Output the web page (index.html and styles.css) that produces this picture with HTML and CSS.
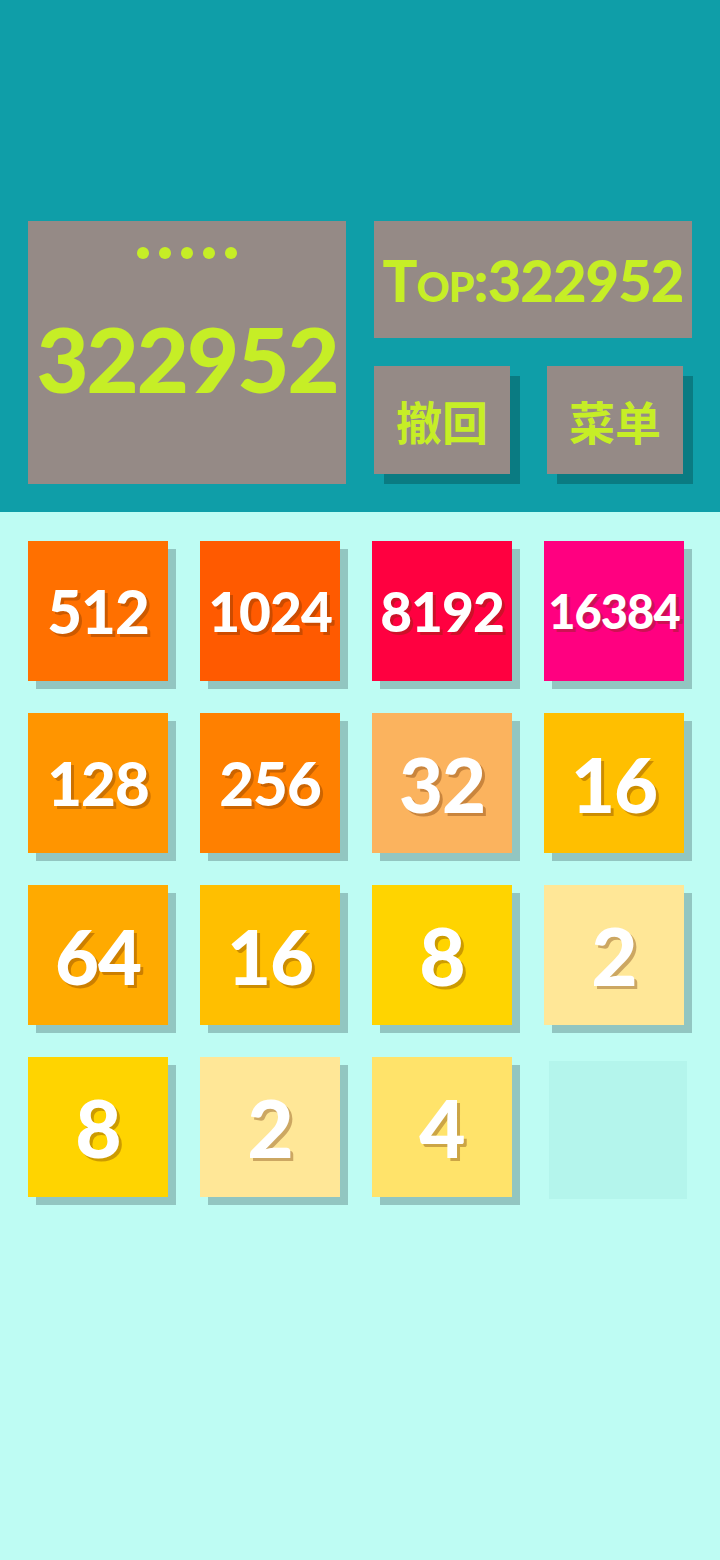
FILE: index.html
```html
<!DOCTYPE html>
<html lang="zh">
<head>
<meta charset="utf-8">
<title>2048</title>
<link rel="stylesheet" href="styles.css">
</head>
<body>
<header class="top">
  <div class="score-box">
    <div class="dots"><span></span><span></span><span></span><span></span><span></span></div>
    <div class="score">322952</div>
  </div>
  <div class="side">
    <div class="best">Top:322952</div>
    <div class="btns">
      <div class="btn">撤回</div>
      <div class="btn">菜单</div>
    </div>
  </div>
</header>
<main class="board">
  <div class="tile t512">512</div>
  <div class="tile t1024 n4">1024</div>
  <div class="tile t8192 n4">8192</div>
  <div class="tile t16384 n5">16384</div>
  <div class="tile t128">128</div>
  <div class="tile t256">256</div>
  <div class="tile t32 n2">32</div>
  <div class="tile t16 n2">16</div>
  <div class="tile t64 n2">64</div>
  <div class="tile t16 n2">16</div>
  <div class="tile t8 n1">8</div>
  <div class="tile t2 n1">2</div>
  <div class="tile t8 n1">8</div>
  <div class="tile t2 n1">2</div>
  <div class="tile t4 n1">4</div>
  <div class="empty"></div>
</main>
</body>
</html>
```
FILE: styles.css
```css
* { box-sizing: border-box; }
html, body { margin: 0; padding: 0; }
body {
  width: 720px;
  min-height: 1560px;
  background: #befcf3;
  font-family: "Lato", "Noto Sans", "Noto Sans CJK SC", sans-serif;
}
.top {
  height: 512px;
  background: #0f9ea8;
  padding: 221px 28px 0 28px;
  display: flex;
  gap: 28px;
}
.score-box {
  width: 318px;
  height: 263px;
  background: #958a86;
  display: flex;
  flex-direction: column;
  align-items: center;
  padding-top: 26px;
}
.dots { display: flex; gap: 10px; height: 12px; }
.dots span {
  width: 12px; height: 12px; border-radius: 50%;
  background: #c6ee26;
}
.score {
  margin-top: 44px;
  font-size: 90px;
  font-weight: 900;
  line-height: 110px;
  color: #c6ee26;
  letter-spacing: -2px;
}
.side { width: 318px; display: flex; flex-direction: column; gap: 28px; }
.best {
  height: 117px;
  background: #958a86;
  color: #c6ee26;
  font-size: 58px;
  font-weight: 900;
  font-variant: small-caps;
  display: flex;
  align-items: center;
  justify-content: center;
  letter-spacing: -1px;
  white-space: nowrap;
}
.btns { display: flex; justify-content: space-between; padding-right: 9px; }
.btn {
  width: 136px;
  height: 108px;
  background: #958a86;
  box-shadow: 10px 10px 0 #0a7b82;
  color: #c6ee26;
  font-family: "Noto Sans CJK SC", sans-serif;
  font-weight: 700;
  font-size: 46px;
  display: flex;
  align-items: center;
  justify-content: center;
}
.board {
  padding: 29px 28px 0 28px;
  display: grid;
  grid-template-columns: repeat(4, 140px);
  grid-auto-rows: 140px;
  gap: 32px;
}
.tile {
  box-shadow: 8px 8px 0 #92c6c1;
  color: #fff;
  font-weight: 900;
  font-size: 60px;
  display: flex;
  align-items: center;
  justify-content: center;
  text-shadow: 3px 3px 0 rgba(110, 50, 0, 0.35);
  letter-spacing: -1px;
}
.tile.n1 { font-size: 80px; }
.tile.n2 { font-size: 76px; }
.tile.n4 { font-size: 55px; }
.tile.n5 { font-size: 47px; }
.empty {
  width: 138px;
  height: 138px;
  margin: 4px 0 0 5px;
  background: #b4f5ec;
}
.t2 { background: #ffe797; }
.t4 { background: #ffe36a; }
.t8 { background: #ffd400; }
.t16 { background: #ffbf00; }
.t32 { background: #fbb35e; }
.t64 { background: #ffaa00; }
.t128 { background: #ff9500; }
.t256 { background: #ff8000; }
.t512 { background: #ff7000; }
.t1024 { background: #ff5a00; }
.t8192 { background: #ff0040; }
.t16384 { background: #ff0080; }
```
